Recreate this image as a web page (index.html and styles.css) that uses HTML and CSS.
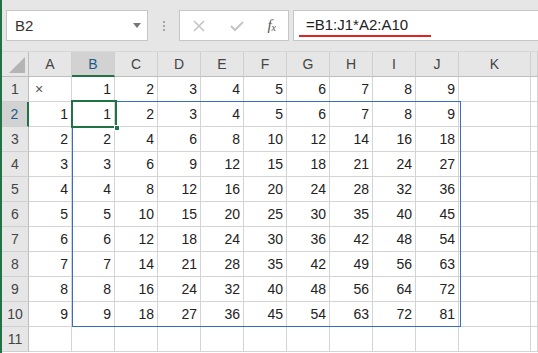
FILE: index.html
```html
<!DOCTYPE html>
<html lang="ja">
    <head>
        <meta charset="UTF-8" />
        <meta name="viewport" content="width=device-width, initial-scale=1.0" />
        <title>Excel 配列数式</title>
        <link rel="stylesheet" href="styles.css">
    </head>
    <body>
        <div class="app">
            <div class="toolbar">
                <div class="namebox">
                    <span>B2</span>
                    <span class="caret"></span>
                </div>
                <div class="dots"><i></i><i></i><i></i></div>
                <div class="fxbox">
                    <svg width="14" height="14" viewBox="0 0 14 14"><path d="M2 2 L12 12 M12 2 L2 12" stroke="#c4c4c4" stroke-width="1.6" fill="none"/></svg>
                    <svg width="16" height="14" viewBox="0 0 16 14"><path d="M2 7 L6 11 L14 3" stroke="#c4c4c4" stroke-width="2" fill="none"/></svg>
                    <span class="fx"><i>f</i><sub>x</sub></span>
                </div>
                <div class="formula">
                    <span class="ftext">=B1:J1*A2:A10</span>
                </div>
            </div>

            <div class="sheet" id="sheet"></div>
        </div>

        <script>
            var sheet = document.getElementById("sheet");
            var cols = ["A", "B", "C", "D", "E", "F", "G", "H", "I", "J", "K", ""];
            var html = '<div class="corner"><span class="tri"></span></div>';
            for (var c = 0; c < cols.length; c++) {
                html += '<div class="colhead' + (cols[c] === "B" ? " active" : "") + '">' + cols[c] + "</div>";
            }
            for (var r = 1; r <= 11; r++) {
                html += '<div class="rowhead' + (r === 2 ? " active" : "") + '">' + r + "</div>";
                for (var c = 0; c < cols.length; c++) {
                    var v = "";
                    var cls = "cell";
                    if (r === 1 && c === 0) {
                        v = "×";
                        cls += " left";
                    } else if (r === 1 && c >= 1 && c <= 9) {
                        v = c;
                    } else if (r >= 2 && r <= 10 && c === 0) {
                        v = r - 1;
                    } else if (r >= 2 && r <= 10 && c >= 1 && c <= 9) {
                        v = c * (r - 1);
                    }
                    html += '<div class="' + cls + '">' + v + "</div>";
                }
            }
            html += '<div class="range"></div>';
            html += '<div class="selected"><span class="handle"></span></div>';
            sheet.innerHTML = html;
        </script>
    </body>
</html>
```

FILE: styles.css
```css
* {
    padding: 0;
    margin: 0;
    box-sizing: border-box;
}

html,
body {
    width: 100%;
    height: 100%;
    overflow: hidden;
    background-color: #fff;
    font-family: "Liberation Sans", "Noto Sans CJK JP", sans-serif;
}

.app {
    height: 100%;
    border-left: 2px solid #217346;
}

.toolbar {
    height: 52px;
    background-color: #e6e6e6;
    display: flex;
    align-items: center;
    padding: 0 0 0 4px;
    border-bottom: 1px solid #d6d6d6;
}

.namebox {
    width: 142px;
    height: 31px;
    background-color: #fff;
    border: 1px solid #c6c6c6;
    display: flex;
    align-items: center;
    justify-content: space-between;
    padding: 0 6px 0 8px;
    font-size: 15px;
    color: #333;
}

.caret {
    width: 0;
    height: 0;
    border-left: 4px solid transparent;
    border-right: 4px solid transparent;
    border-top: 5px solid #777;
}

.dots {
    width: 31px;
    display: flex;
    flex-direction: column;
    align-items: center;
    gap: 2px;
}

.dots i {
    width: 2px;
    height: 2px;
    background-color: #a6a6a6;
}

.fxbox {
    width: 110px;
    height: 31px;
    background-color: #fff;
    border: 1px solid #c6c6c6;
    display: flex;
    align-items: center;
    justify-content: space-between;
    padding: 0 12px 0 12px;
}

.fx {
    font-family: "Liberation Serif", serif;
    font-size: 15px;
    color: #555;
    font-style: italic;
}

.fx sub {
    font-size: 10px;
    vertical-align: -1px;
}

.formula {
    flex: 1;
    height: 31px;
    margin-left: 4px;
    background-color: #fff;
    border: 1px solid #c6c6c6;
    border-right: none;
    display: flex;
    align-items: center;
    padding-left: 12px;
}

.ftext {
    font-size: 15px;
    color: #222;
    padding: 0 1px 1px 1px;
    border-bottom: 2px solid #e52222;
    margin-top: 1px;
    line-height: 18px;
    margin-left: -7px;
    padding-left: 7px;
    padding-right: 23px;
}

.sheet {
    position: relative;
    display: grid;
    grid-template-columns: 27px repeat(10, 43px) 72px 1fr;
    grid-auto-rows: 25px;
    font-size: 14px;
    color: #222;
}

.corner {
    background-color: #e6e6e6;
    border-right: 1px solid #bdbdbd;
    border-bottom: 1px solid #bdbdbd;
    position: relative;
}

.tri {
    position: absolute;
    right: 3px;
    bottom: 3px;
    width: 0;
    height: 0;
    border-left: 16px solid transparent;
    border-bottom: 16px solid #b4b4b4;
}

.colhead {
    background-color: #e6e6e6;
    border-right: 1px solid #cfcfcf;
    border-bottom: 1px solid #bdbdbd;
    text-align: center;
    line-height: 24px;
    color: #444;
}

.colhead.active {
    background-color: #d2d2d2;
    color: #1e5a86;
    border-bottom: 2px solid #217346;
}

.rowhead {
    background-color: #e6e6e6;
    border-right: 1px solid #bdbdbd;
    border-bottom: 1px solid #cfcfcf;
    text-align: center;
    line-height: 25px;
    color: #444;
}

.rowhead.active {
    background-color: #d2d2d2;
    color: #1e5a86;
    border-right: 2px solid #217346;
}

.cell {
    border-right: 1px solid #d4d4d4;
    border-bottom: 1px solid #d4d4d4;
    text-align: right;
    padding-right: 3px;
    line-height: 25px;
}

.cell.left {
    text-align: left;
    padding-left: 6px;
    color: #555;
}

.range {
    position: absolute;
    left: 70px;
    top: 49px;
    width: 389px;
    height: 226px;
    border: 1px solid #3b6cc4;
    pointer-events: none;
}

.selected {
    position: absolute;
    left: 69px;
    top: 48px;
    width: 46px;
    height: 28px;
    border: 2px solid #217346;
}

.handle {
    position: absolute;
    right: -5px;
    bottom: -5px;
    width: 6px;
    height: 6px;
    background-color: #217346;
    border: 1px solid #fff;
}
```
